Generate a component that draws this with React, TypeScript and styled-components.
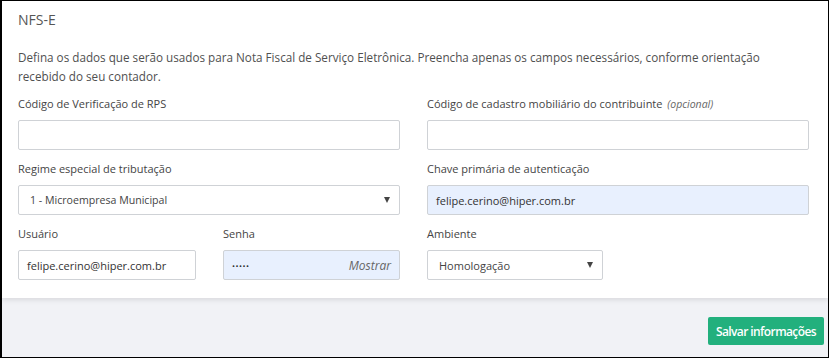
import React from 'react';
import styled, { createGlobalStyle } from 'styled-components';

const GlobalStyle = createGlobalStyle`
  * { box-sizing: border-box; }
  body {
    margin: 0;
    font-family: "Open Sans", "Liberation Sans", sans-serif;
    background: #fff;
  }
`;

const Frame = styled.div`
  width: 829px;
  height: 358px;
  border: 1px solid #000;
  border-left-width: 2px;
  background: #f1f2f6;
  display: flex;
  flex-direction: column;
  overflow: hidden;
`;

const Card = styled.section`
  background: #fff;
  padding: 9px 18px 18px 16px;
  box-shadow: 0 2px 5px rgba(0, 0, 0, 0.1);
  position: relative;
  z-index: 1;
`;

const Title = styled.h2`
  margin: 0;
  font-size: 14px;
  line-height: 19px;
  font-weight: 400;
  color: #555;
`;

const Description = styled.p`
  margin: 19px 0 10px;
  font-size: 11.7px;
  line-height: 19px;
  color: #505050;
`;

const Grid = styled.div`
  display: grid;
  grid-template-columns: 382px 382px;
  column-gap: 27px;
  row-gap: 11px;
`;

const SubRow = styled.div`
  display: grid;
  grid-template-columns: 178px 177px;
  column-gap: 27px;
`;

const Field = styled.div<{ $width?: number }>`
  display: flex;
  flex-direction: column;
  width: ${p => (p.$width ? `${p.$width}px` : 'auto')};
`;

const Label = styled.label`
  font-size: 11px;
  line-height: 16px;
  color: #444;
  margin-bottom: 8px;
  white-space: nowrap;
`;

const Optional = styled.em`
  font-size: 10.5px;
  color: #666;
  margin-left: 2px;
`;

const Box = styled.div<{ $filled?: boolean }>`
  height: 30px;
  border: 1px solid #cfd2d6;
  border-radius: 2px;
  background: ${p => (p.$filled ? '#e8f0fe' : '#fff')};
  display: flex;
  align-items: center;
  padding: 0 8px;
  font-size: 11px;
  color: #333;
`;

const SelectBox = styled(Box)<{ $small?: boolean }>`
  padding: 0 9px 0 11px;
  justify-content: space-between;
  font-size: ${p => (p.$small ? '10.6px' : '11px')};
  color: #444;
`;

const Caret = styled.span`
  width: 0;
  height: 0;
  border-left: 3.5px solid transparent;
  border-right: 3.5px solid transparent;
  border-top: 6px solid #444;
`;

const Dots = styled.span`
  font-size: 8px;
  letter-spacing: 0.5px;
  color: #333;
  flex: 1;
`;

const ShowLink = styled.span`
  font-style: italic;
  font-size: 12px;
  color: #666;
`;

const Footer = styled.div`
  flex: 1;
  display: flex;
  justify-content: flex-end;
  align-items: flex-start;
  padding: 19px 4px 0 0;
`;

const SaveButton = styled.button`
  height: 28px;
  padding: 0 8px;
  border: none;
  border-radius: 2px;
  background: #22b07d;
  color: #fff;
  white-space: nowrap;
  font-family: "Open Sans", "Liberation Sans", sans-serif;
  font-size: 12px;
  font-weight: 600;
  letter-spacing: -0.6px;
`;

export default function App() {
  return (
    <>
      <GlobalStyle />
      <Frame>
        <Card>
          <Title>NFS-E</Title>
          <Description>
            Defina os dados que serão usados para Nota Fiscal de Serviço Eletrônica. Preencha apenas os campos
            necessários, conforme orientação recebido do seu contador.
          </Description>
          <Grid>
            <Field>
              <Label>Código de Verificação de RPS</Label>
              <Box />
            </Field>
            <Field>
              <Label>
                Código de cadastro mobiliário do contribuinte <Optional>(opcional)</Optional>
              </Label>
              <Box />
            </Field>
            <Field>
              <Label>Regime especial de tributação</Label>
              <SelectBox $small>
                1 - Microempresa Municipal
                <Caret />
              </SelectBox>
            </Field>
            <Field>
              <Label>Chave primária de autenticação</Label>
              <Box $filled>felipe.cerino@hiper.com.br</Box>
            </Field>
            <SubRow>
              <Field>
                <Label>Usuário</Label>
                <Box>felipe.cerino@hiper.com.br</Box>
              </Field>
              <Field>
                <Label>Senha</Label>
                <Box $filled>
                  <Dots>•••••</Dots>
                  <ShowLink>Mostrar</ShowLink>
                </Box>
              </Field>
            </SubRow>
            <Field $width={176}>
              <Label>Ambiente</Label>
              <SelectBox>
                Homologação
                <Caret />
              </SelectBox>
            </Field>
          </Grid>
        </Card>
        <Footer>
          <SaveButton>Salvar informações</SaveButton>
        </Footer>
      </Frame>
    </>
  );
}
